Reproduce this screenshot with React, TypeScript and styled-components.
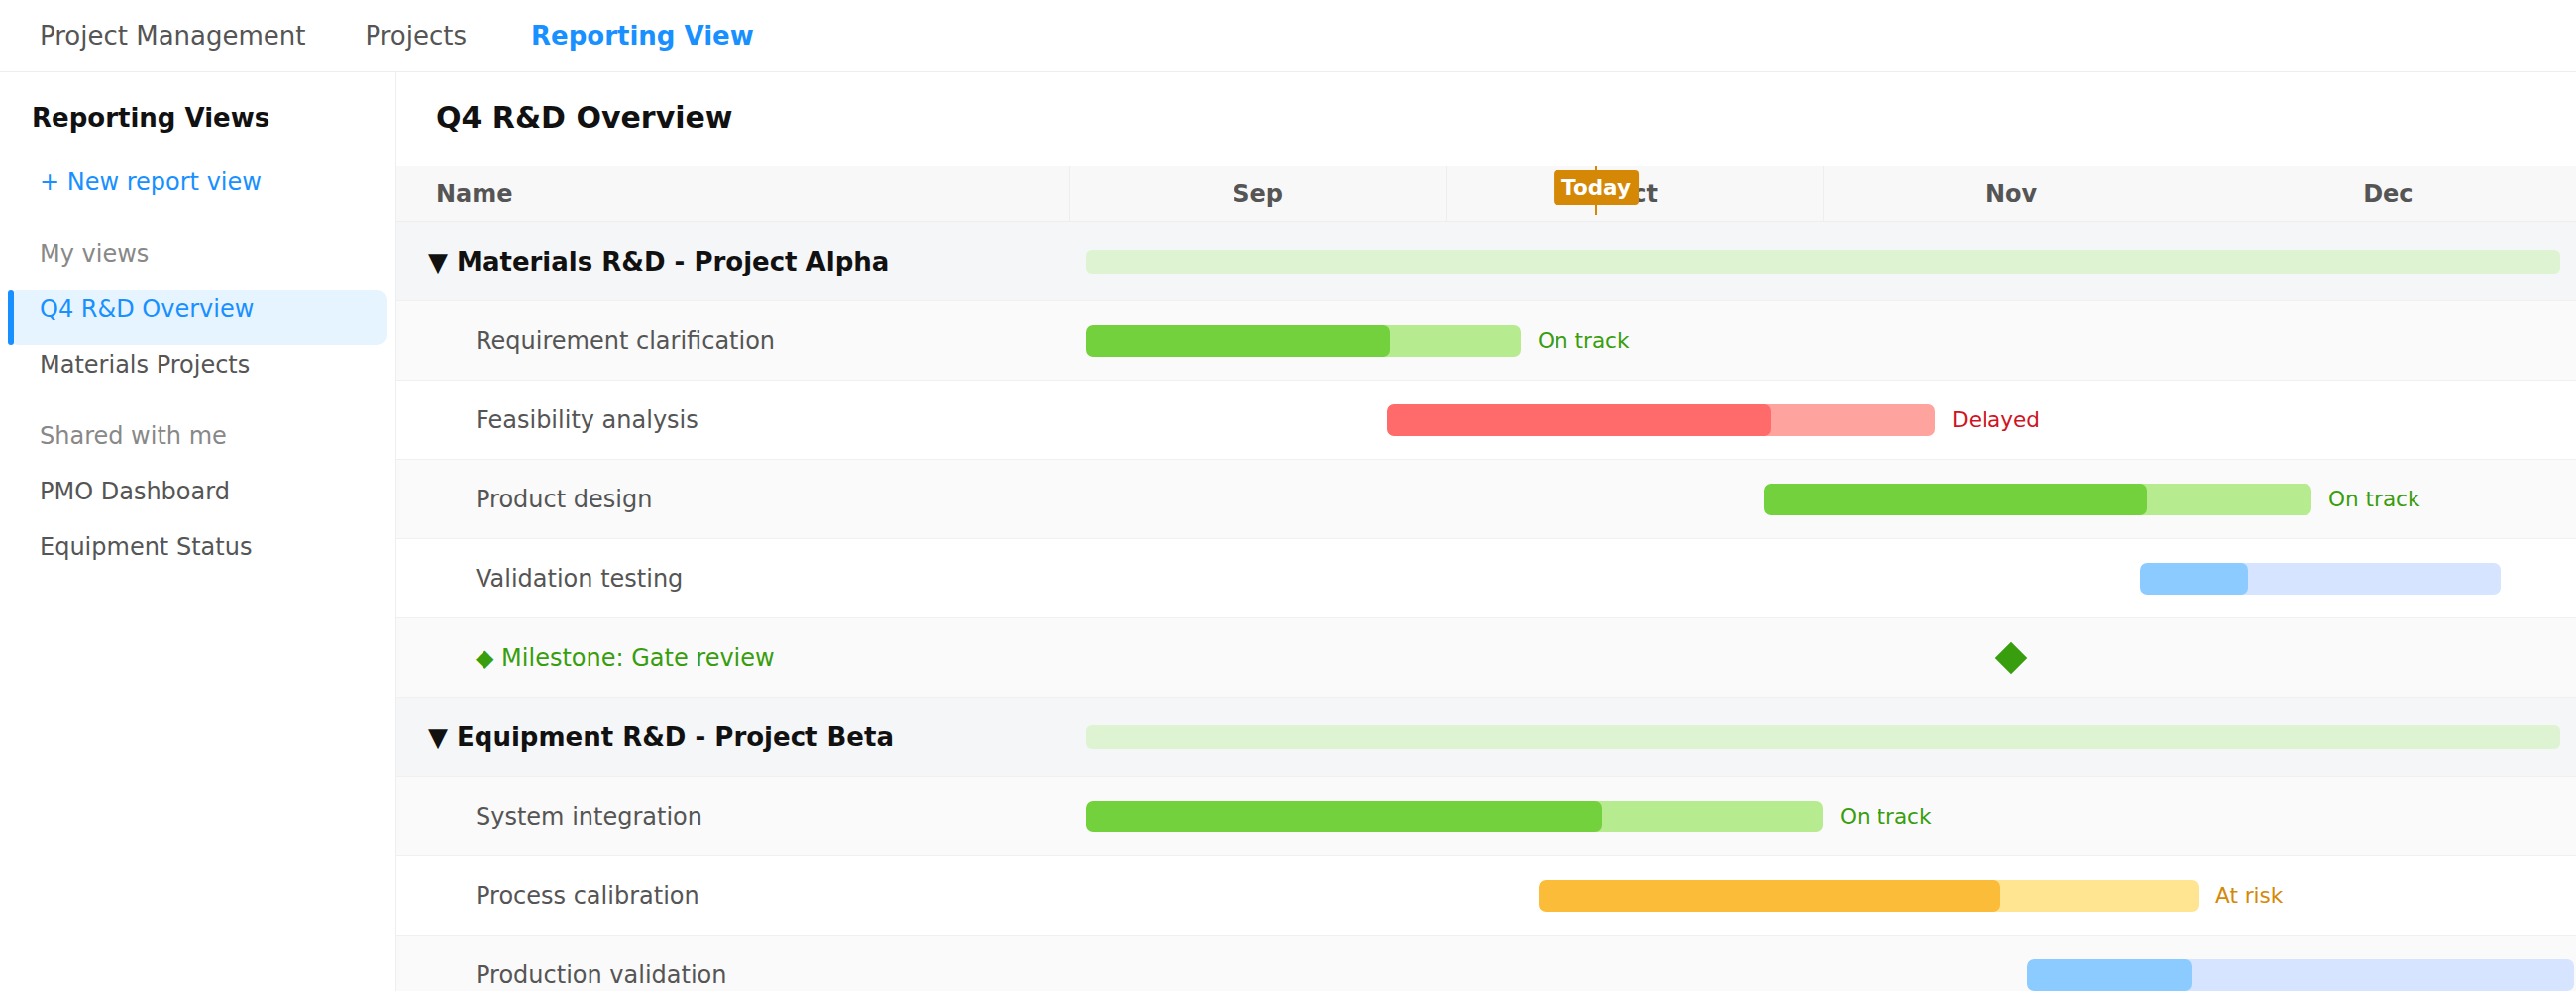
import React from "react";
import styled, { createGlobalStyle, css } from "styled-components";

const GlobalStyle = createGlobalStyle`
  html, body {
    margin: 0;
    padding: 0;
    background: #ffffff;
    font-family: "DejaVu Sans", "Liberation Sans", sans-serif;
  }
  * { box-sizing: border-box; }
`;

/* ---------- timeline scale ---------- */
const LANE = 1520; // timeline units: Sep..Dec, 380 per month
const pct = (v: number) => `${(v / LANE) * 100}%`;

type Status = "ontrack" | "delayed" | "risk" | "planned";

const palette: Record<Status, { fill: string; track: string; text: string; label?: string }> = {
  ontrack: { fill: "#73d13d", track: "#b7eb8f", text: "#389e0d", label: "On track" },
  delayed: { fill: "#ff6b6b", track: "#ffa39e", text: "#cf1322", label: "Delayed" },
  risk: { fill: "#fbbc3a", track: "#ffe591", text: "#d48806", label: "At risk" },
  planned: { fill: "#8ccbff", track: "#d6e4ff", text: "#1890ff" },
};

type Task =
  | { kind: "task"; name: string; start: number; end: number; progress: number; status: Status }
  | { kind: "milestone"; name: string; at: number };

type Group = { name: string; tasks: Task[] };

const groups: Group[] = [
  {
    name: "Materials R&D - Project Alpha",
    tasks: [
      { kind: "task", name: "Requirement clarification", start: 16, end: 455, progress: 0.7, status: "ontrack" },
      { kind: "task", name: "Feasibility analysis", start: 320, end: 873, progress: 0.7, status: "delayed" },
      { kind: "task", name: "Product design", start: 700, end: 1253, progress: 0.7, status: "ontrack" },
      { kind: "task", name: "Validation testing", start: 1080, end: 1444, progress: 0.3, status: "planned" },
      { kind: "milestone", name: "Gate review", at: 950 },
    ],
  },
  {
    name: "Equipment R&D - Project Beta",
    tasks: [
      { kind: "task", name: "System integration", start: 16, end: 760, progress: 0.7, status: "ontrack" },
      { kind: "task", name: "Process calibration", start: 473, end: 1139, progress: 0.7, status: "risk" },
      { kind: "task", name: "Production validation", start: 966, end: 1518, progress: 0.3, status: "planned" },
    ],
  },
];

const months = ["Sep", "Oct", "Nov", "Dec"];
const TODAY = 531;

/* ---------- shell ---------- */
const Page = styled.div`
  height: 100vh;
  display: flex;
  flex-direction: column;
  overflow: hidden;
`;

const TopNav = styled.nav`
  height: 73px;
  flex: 0 0 73px;
  display: flex;
  align-items: center;
  padding-left: 10px;
  border-bottom: 1px solid #eeeeee;
`;

const NavItem = styled.a<{ $active?: boolean }>`
  padding: 0 30px;
  font-size: 26px;
  line-height: 40px;
  color: #555555;
  text-decoration: none;
  ${(p) =>
    p.$active &&
    css`
      margin-left: 5px;
      color: #1890ff;
      font-weight: 700;
    `}
`;

const Body = styled.div`
  flex: 1;
  display: flex;
  min-height: 0;
`;

/* ---------- sidebar ---------- */
const Sidebar = styled.aside`
  width: 400px;
  flex: 0 0 400px;
  border-right: 1px solid #eeeeee;
  display: flex;
  flex-direction: column;
`;

const SidebarTitle = styled.h2`
  margin: 26px 0 0;
  padding-left: 32px;
  font-size: 26px;
  line-height: 40px;
  font-weight: 700;
  color: #111111;
`;

const NewViewLink = styled.a`
  margin-top: 25px;
  padding-left: 40px;
  font-size: 24px;
  line-height: 40px;
  color: #1890ff;
  text-decoration: none;
`;

const SectionLabel = styled.div<{ $gap: number }>`
  margin-top: ${(p) => p.$gap}px;
  padding-left: 40px;
  font-size: 24px;
  line-height: 40px;
  color: #888888;
`;

const ViewList = styled.ul`
  list-style: none;
  margin: 17px 0 0;
  padding: 0;
`;

const ViewItem = styled.li<{ $selected?: boolean }>`
  position: relative;
  margin: 0 8px 1px;
  padding: 0 0 17px 32px;
  font-size: 24px;
  line-height: 38px;
  color: #555555;
  border-radius: 10px;
  ${(p) =>
    p.$selected &&
    css`
      background: #e6f4ff;
      color: #1890ff;
      &::before {
        content: "";
        position: absolute;
        left: 0;
        top: 0;
        bottom: 0;
        width: 6px;
        border-radius: 3px;
        background: #1890ff;
      }
    `}
`;

/* ---------- main ---------- */
const Main = styled.main`
  flex: 1;
  min-width: 0;
  display: flex;
  flex-direction: column;
  overflow: hidden;
`;

const ReportTitle = styled.h1`
  margin: 0;
  height: 95px;
  flex: 0 0 95px;
  padding: 26px 0 0 40px;
  font-size: 30px;
  line-height: 40px;
  font-weight: 700;
  color: #111111;
`;

const HeaderRow = styled.div`
  display: flex;
  height: 56px;
  flex: 0 0 56px;
  background: #f8f8f8;
  border-bottom: 1px solid #eeeeee;
`;

const NameHeader = styled.div`
  width: 680px;
  flex: 0 0 680px;
  padding-left: 40px;
  display: flex;
  align-items: center;
  border-right: 1px solid #eeeeee;
  font-size: 24px;
  font-weight: 700;
  color: #555555;
`;

const MonthStrip = styled.div`
  flex: 1;
  display: flex;
  position: relative;
`;

const MonthCell = styled.div`
  flex: 1;
  display: flex;
  align-items: center;
  justify-content: center;
  font-size: 24px;
  font-weight: 700;
  color: #555555;
  & + & {
    border-left: 1px solid #eeeeee;
  }
`;

const TodayMarker = styled.div`
  position: absolute;
  top: 0;
  width: 2px;
  height: 49px;
  margin-left: -1px;
  background: #d48806;
`;

const TodayBadge = styled.span`
  position: absolute;
  top: 4px;
  left: 50%;
  transform: translateX(-50%);
  padding: 0 8px;
  height: 35px;
  line-height: 35px;
  border-radius: 4px;
  background: #d48806;
  color: #ffffff;
  font-size: 21.5px;
  font-weight: 700;
`;

const Rows = styled.div`
  flex: 1;
  overflow: hidden;
`;

const Row = styled.div<{ $tone: "group" | "stripe" | "plain" }>`
  display: flex;
  height: 80px;
  border-bottom: 1px solid #f0f0f0;
  background: ${(p) => (p.$tone === "group" ? "#f5f6f8" : p.$tone === "stripe" ? "#fafafa" : "#ffffff")};
`;

const NameCell = styled.div<{ $level: 0 | 1 }>`
  width: 680px;
  flex: 0 0 680px;
  display: flex;
  align-items: center;
  padding-left: ${(p) => (p.$level === 0 ? 32 : 80)}px;
  font-size: ${(p) => (p.$level === 0 ? 26 : 24)}px;
  font-weight: ${(p) => (p.$level === 0 ? 700 : 400)};
  color: ${(p) => (p.$level === 0 ? "#111111" : "#555555")};
  white-space: nowrap;
`;

const MilestoneName = styled.span`
  color: #389e0d;
`;

const Lane = styled.div`
  flex: 1;
  position: relative;
`;

const BarSlot = styled.div`
  position: absolute;
  top: 0;
  bottom: 0;
  display: flex;
  align-items: center;
`;

const SummaryBar = styled.div`
  width: 100%;
  height: 24px;
  border-radius: 6px;
  background: #ddf3d1;
`;

const TaskBar = styled.div<{ $track: string }>`
  flex: 0 0 100%;
  height: 32px;
  border-radius: 7px;
  background: ${(p) => p.$track};
  overflow: hidden;
`;

const Progress = styled.div<{ $fill: string }>`
  height: 100%;
  border-radius: 7px;
  background: ${(p) => p.$fill};
`;

const StatusLabel = styled.span<{ $color: string }>`
  flex: 0 0 auto;
  margin-left: 17px;
  font-size: 21.6px;
  color: ${(p) => p.$color};
  white-space: nowrap;
`;

const Diamond = styled.div`
  position: absolute;
  top: 50%;
  width: 23px;
  height: 23px;
  background: #389e0d;
  transform: translate(-50%, -50%) rotate(45deg);
`;

function TaskRow({ task, tone }: { task: Task; tone: "stripe" | "plain" }) {
  if (task.kind === "milestone") {
    return (
      <Row $tone={tone}>
        <NameCell $level={1}>
          <MilestoneName>◆ Milestone: {task.name}</MilestoneName>
        </NameCell>
        <Lane>
          <Diamond style={{ left: pct(task.at) }} />
        </Lane>
      </Row>
    );
  }
  const colors = palette[task.status];
  return (
    <Row $tone={tone}>
      <NameCell $level={1}>{task.name}</NameCell>
      <Lane>
        <BarSlot style={{ left: pct(task.start), width: pct(task.end - task.start) }}>
          <TaskBar $track={colors.track}>
            <Progress $fill={colors.fill} style={{ width: `${task.progress * 100}%` }} />
          </TaskBar>
          {colors.label && <StatusLabel $color={colors.text}>{colors.label}</StatusLabel>}
        </BarSlot>
      </Lane>
    </Row>
  );
}

export default function App() {
  return (
    <>
      <GlobalStyle />
      <Page>
        <TopNav>
          <NavItem>Project Management</NavItem>
          <NavItem>Projects</NavItem>
          <NavItem $active>Reporting View</NavItem>
        </TopNav>
        <Body>
          <Sidebar>
            <SidebarTitle>Reporting Views</SidebarTitle>
            <NewViewLink>+ New report view</NewViewLink>
            <SectionLabel $gap={32}>My views</SectionLabel>
            <ViewList>
              <ViewItem $selected>Q4 R&amp;D Overview</ViewItem>
              <ViewItem>Materials Projects</ViewItem>
            </ViewList>
            <SectionLabel $gap={15}>Shared with me</SectionLabel>
            <ViewList>
              <ViewItem>PMO Dashboard</ViewItem>
              <ViewItem>Equipment Status</ViewItem>
            </ViewList>
          </Sidebar>
          <Main>
            <ReportTitle>Q4 R&amp;D Overview</ReportTitle>
            <HeaderRow>
              <NameHeader>Name</NameHeader>
              <MonthStrip>
                {months.map((m) => (
                  <MonthCell key={m}>{m}</MonthCell>
                ))}
                <TodayMarker style={{ left: pct(TODAY) }}>
                  <TodayBadge>Today</TodayBadge>
                </TodayMarker>
              </MonthStrip>
            </HeaderRow>
            <Rows>
              {groups.map((g) => (
                <React.Fragment key={g.name}>
                  <Row $tone="group">
                    <NameCell $level={0}>▼ {g.name}</NameCell>
                    <Lane>
                      <BarSlot style={{ left: pct(16), width: pct(LANE - 32) }}>
                        <SummaryBar />
                      </BarSlot>
                    </Lane>
                  </Row>
                  {g.tasks.map((t, i) => (
                    <TaskRow key={t.name} task={t} tone={i % 2 === 0 ? "stripe" : "plain"} />
                  ))}
                </React.Fragment>
              ))}
            </Rows>
          </Main>
        </Body>
      </Page>
    </>
  );
}
